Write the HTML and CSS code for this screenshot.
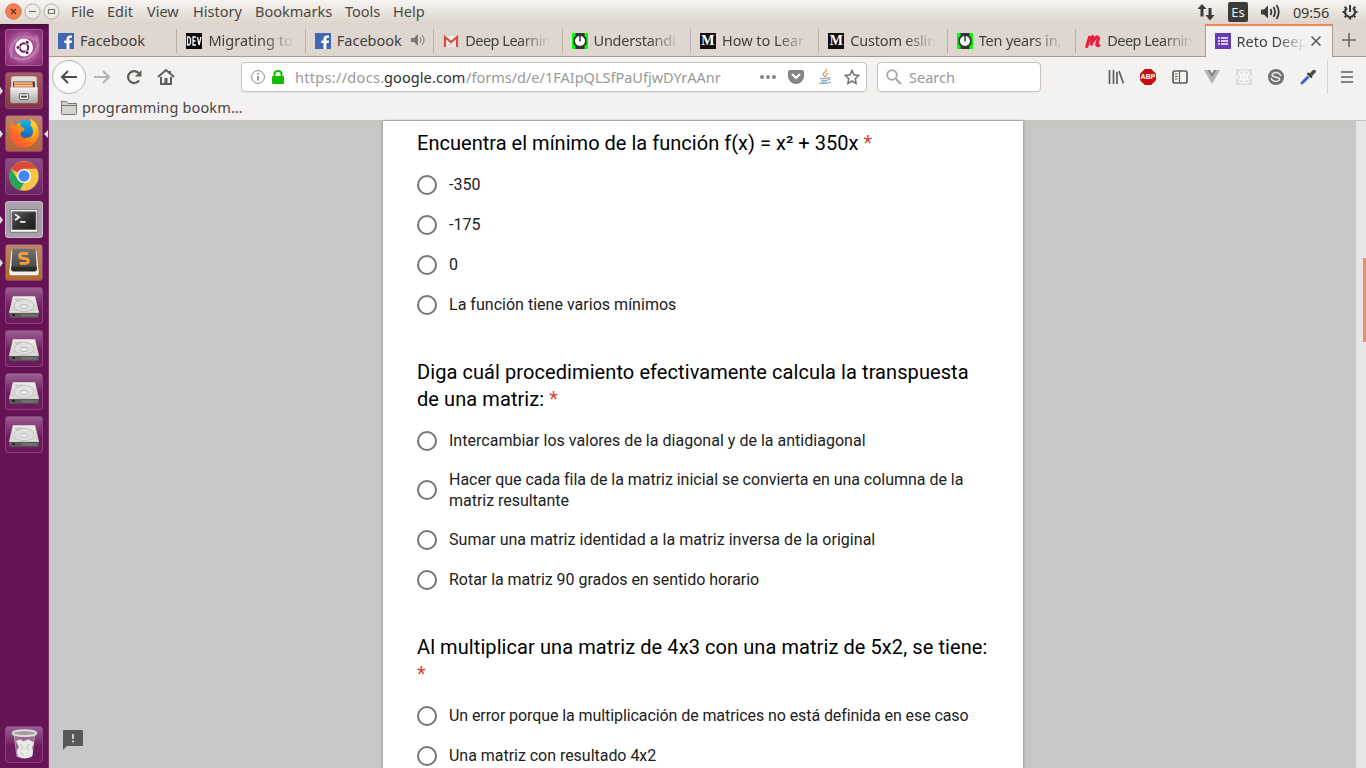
FILE: index.html
```html
<!DOCTYPE html>
<html lang="es">
<head>
<meta charset="utf-8">
<title>Reto Deep Learning</title>
<link rel="stylesheet" href="styles.css">
</head>
<body>
<svg class="defs" width="0" height="0">
  <defs>
    <linearGradient id="metal" x1="0" y1="0" x2="0" y2="1"><stop offset="0" stop-color="#f4f4f2"/><stop offset="1" stop-color="#a5a5a2"/></linearGradient>
    <linearGradient id="plate" x1="0" y1="0" x2="0" y2="1"><stop offset="0" stop-color="#ececea"/><stop offset="1" stop-color="#cfcfcc"/></linearGradient>
    <linearGradient id="dark" x1="0" y1="0" x2="1" y2="1"><stop offset="0" stop-color="#686866"/><stop offset=".5" stop-color="#30302f"/><stop offset="1" stop-color="#1c1c1b"/></linearGradient>
    <linearGradient id="key" x1="0" y1="0" x2="0" y2="1"><stop offset="0" stop-color="#737371"/><stop offset="1" stop-color="#444442"/></linearGradient>
    <linearGradient id="fox" x1="1" y1="0" x2="0" y2="1"><stop offset="0" stop-color="#fff33d"/><stop offset=".45" stop-color="#ff980e"/><stop offset="1" stop-color="#ff2450"/></linearGradient>
    <linearGradient id="globe" x1="0" y1="0" x2="0" y2="1"><stop offset="0" stop-color="#10b6e8"/><stop offset="1" stop-color="#223d9c"/></linearGradient>
    <symbol id="fb" viewBox="0 0 16 16"><path fill="#4267b2" d="M0 0h16v16H0z"/><path fill="#fff" d="M8.500 16v-6H6.300V7.500h2.200V6c0-2.300 1.400-3.500 3.500-3.500h2v2.300h-1.300c-1 0-1.300.5-1.300 1.300v1.400H14l-.3 2.500h-2.300v6z"/></symbol>
    <symbol id="watch" viewBox="0 0 16 16"><path fill="#0f0" d="M0 0h16v16H0z"/><path fill="#333" d="M3.500 0h9v3l2 2v6l-2 2v3h-9v-3l-2-2V5l2-2z"/><circle cx="8" cy="8" r="5" fill="#fff"/><path d="M8 3v5.500" stroke="#333" stroke-width="1.500"/></symbol>
    <symbol id="disk" viewBox="0 0 37 37"><path fill="url(#plate)" stroke="#e5e5e2" stroke-width=".6" d="M7 9h23l4 17H3z"/><path d="M3 26h31v4.500q0 1-1 1H4q-1 0-1-1z" fill="#5b5b58"/><path d="M3 25.500h31" stroke="#fff" stroke-width="1"/><path d="M16 28h17v2H16z" fill="#777"/><ellipse cx="18.500" cy="18.500" rx="10.500" ry="6.500" fill="#dfdfdd" stroke="#c1c1be"/><ellipse cx="18.500" cy="19.500" rx="4" ry="2" fill="#f7f7f6" stroke="#aaa"/><path d="M9 11.500h8l-6 3z" fill="#d2d2d0" stroke="#aaa" stroke-width=".5"/><path d="M6 28.500h3" stroke="#222" stroke-width="2"/></symbol>
  </defs>
</svg>

<header class="panel">
  <div class="wm">
    <svg width="60" height="24" viewBox="0 0 60 24"><circle cx="13.500" cy="11.500" r="7.800" fill="#f37f53" stroke="#cf7956"/><path d="M11 9l5 5m0-5l-5 5" stroke="#653522" stroke-width="1.300"/><circle cx="32.500" cy="11.500" r="7.600" fill="#efebe6" stroke="#b7aea5"/><path d="M29 11.500h7" stroke="#777067" stroke-width="1.200"/><circle cx="51.500" cy="11.500" r="7.600" fill="#efebe6" stroke="#b7aea5"/><path d="M48.500 9.500h6v4h-6z" fill="none" stroke="#777067" stroke-width="1.200"/></svg>
  </div>
  <nav class="menu"><span class="m-file">File</span><span class="m-edit">Edit</span><span class="m-view">View</span><span class="m-hist">History</span><span class="m-book">Bookmarks</span><span class="m-tools">Tools</span><span>Help</span></nav>
  <div class="tray">
    <svg width="18" height="18" viewBox="0 0 18 18" fill="#3c3b37"><path d="M5 1L.5 6h3v7.500h3V6h3z"/><path d="M13 17.500l-4.500-5.500h3V5h3v7h3z"/></svg>
    <span class="kbd">Es</span>
    <svg class="vol" width="20" height="18" viewBox="0 0 20 18"><path fill="#3c3b37" d="M0 6.500h3l4-4v13l-4-4H0z"/><path d="M9.500 6q1.800 3 0 6M12.500 4q3 5 0 10M15.500 2q4.500 7 0 14" fill="none" stroke="#3c3b37" stroke-width="1.800"/></svg>
    <span class="clock">09:56</span>
    <svg width="16" height="18" viewBox="0 0 16 18" fill="none" stroke="#3c3b37"><path d="M5 5a5 5 0 1 0 6 0" stroke-width="2.200"/><path d="M8 2v7" stroke-width="2"/><path d="M.5 9h2m11 0h2M2.700 3.700L4 5m8 0l1.300-1.300M2.700 14.300L4 13m8 0l1.300 1.300M8 14v2.500" stroke-width="2.200"/></svg>
  </div>
</header>

<div class="desk">
  <aside class="launcher">
    <div class="tile ubuntu"><svg viewBox="0 0 37 37"><circle cx="18.500" cy="18.500" r="14" fill="none" stroke="#fff" stroke-opacity=".1" stroke-width="6"/><path d="M6 30C0 12 17 1 32 11M31 5C39 23 22 36 8 29" fill="none" stroke="#fff" stroke-opacity=".2" stroke-width="3"/><circle cx="18.500" cy="18.500" r="9.500" fill="#fff"/><circle cx="18.500" cy="18.500" r="4.500" fill="none" stroke="#6a1358" stroke-width="2"/><g fill="#6a1358" stroke="#fff" stroke-width=".8"><circle cx="12.200" cy="18.500" r="2"/><circle cx="21.800" cy="13" r="2"/><circle cx="21.800" cy="24" r="2"/></g></svg></div>
    <div class="tile files run"><svg viewBox="0 0 37 37"><path d="M5 6q0-2.500 3-2.500h21q3 0 3 2.500v11H5z" fill="#dededb"/><path d="M7 9h23v7H7z" fill="#4b322b"/><path d="M8 10h20v5H8z" fill="#ed7434"/><path d="M8 10.500h19M8 13.500h20" stroke="#fff0d5" stroke-width="1"/><path d="M4 15h29v15q0 2-2 2H6q-2 0-2-2z" fill="url(#metal)"/><rect x="13.500" y="22" width="10" height="6" rx="1.500" fill="#eee" stroke="#555" stroke-width="1"/><path d="M15.500 25h6" stroke="#444" stroke-width="2"/></svg></div>
    <div class="tile firefox run active"><svg viewBox="0 0 37 37"><circle cx="19" cy="18" r="13.500" fill="url(#globe)"/><path d="M5 6q1 4 4 4 3-3 7-3-2 2-1 4l4 2q0 3-4 4-1 7 6 6 7 0 7-6 0-5-3-7 2-4 0-7 9 4 9 15a15 15 0 1 1-30-1q-1-6 1-11z" fill="url(#fox)"/><path d="M4 19c0 14 16 19 25 10 5-5 5-12 2-18 1 8-2 18-12 17-7 0-10-4-10-9z" fill="#ff6d25" fill-opacity=".4"/></svg></div>
    <div class="tile chrome"><svg viewBox="0 0 37 37"><circle cx="18.500" cy="18" r="15.500" fill="#f5c647"/><path d="M18.500 18L5 10.500a15.500 15.500 0 0 1 27-.1H18.500z" fill="#db4939"/><path d="M5 10.500l7 11.200 6.500 3.800-4.500 7.500A15.500 15.500 0 0 1 5 10.500z" fill="#27a35a"/><circle cx="18.500" cy="18" r="7.500" fill="#fff"/><circle cx="18.500" cy="18" r="6" fill="#4688f1"/></svg></div>
    <div class="tile terminal run"><svg viewBox="0 0 37 37"><path d="M4 8h29v24H4z" fill="#f4f4f3" stroke="#777"/><path d="M6 10.500h25v18.500H6z" fill="url(#dark)" stroke="#555"/><path d="M9 13l4.500 3L9 19m5.500 2h5.500" fill="none" stroke="#fff" stroke-width="1.700"/></svg></div>
    <div class="tile sublime run"><svg viewBox="0 0 37 37"><path d="M5 8q0-3 3-3h21q3 0 3 3l2 21q0 3-3 3H6q-3 0-3-3z" fill="#f3f1ee"/><path d="M8 4h21q2 0 2 2l1 20H5L6 6q0-2 2-2z" fill="url(#key)"/><path d="M5 23h27v3q0 2-2 2H7q-2 0-2-2z" fill="#2c2c2b"/><path d="M23 9h-6q-3 0-3 2.500 0 2 3 2.500l3 .5q3 .5 3 2.500 0 2.500-3 2.500h-6" fill="none" stroke="#ff9d3c" stroke-width="3"/></svg></div>
    <div class="tile"><svg><use href="#disk"/></svg></div>
    <div class="tile"><svg><use href="#disk"/></svg></div>
    <div class="tile"><svg><use href="#disk"/></svg></div>
    <div class="tile"><svg><use href="#disk"/></svg></div>
    <div class="tile trash"><svg viewBox="0 0 37 37"><path d="M8 7h22l-3 24q-8 4-16 0z" fill="#c8b7c5" fill-opacity=".4" stroke="#ddd" stroke-opacity=".6"/><path d="M10 15l4-2 4 2 5-2 6 3-2 6 1 3-1 6q-8 4-15 0l-1-6 2-4z" fill="#e9e9e7"/><path d="M14 18l3 3-2 3m9-6l-3 4 3 3M15 27l3 3" fill="none" stroke="#b5b5b3" stroke-width="1"/><ellipse cx="19" cy="6.500" rx="12.500" ry="3" fill="#a39aa0" stroke="#dedfdc" stroke-width="2"/></svg></div>
  </aside>

  <main class="browser">
    <div class="tabs">
      <div class="tab"><svg class="ico"><use href="#fb"/></svg><span>Facebook</span></div>
      <div class="tab"><svg class="ico" viewBox="0 0 16 16"><path fill="#0a0a0a" d="M0 0h16v16H0z"/><path d="M1.500 4v8H3l1.500-1.500v-5L3 4zM10 4H7v8h3M7 8h2.500M11.500 4l1.500 8 2-8" fill="none" stroke="#fff" stroke-width="1.300"/></svg><span class="fade">Migrating to</span></div>
      <div class="tab"><svg class="ico"><use href="#fb"/></svg><span class="short">Facebook</span><svg class="spk" width="14" height="12" viewBox="0 0 14 12"><path d="M0 4h3l4-4v12L3 8H0z" fill="#777"/><path d="M9 3q2 3 0 6M11 1q4 5 0 10" fill="none" stroke="#777"/></svg></div>
      <div class="tab"><svg class="ico" viewBox="0 0 16 16"><path d="M1 3h14v11H1z" fill="#f2f0ef"/><path d="M3 13l5-5 5 5" fill="#ddd"/><path d="M2 14V4l6 5 6-5v10" fill="none" stroke="#d54b3d" stroke-width="2.200"/></svg><span class="fade t1">Deep Learnin</span></div>
      <div class="tab"><svg class="ico"><use href="#watch"/></svg><span class="fade t2">Understandi</span></div>
      <div class="tab"><span class="medium">M</span><span class="fade">How to Lear</span></div>
      <div class="tab"><span class="medium">M</span><span class="fade t3">Custom eslin</span></div>
      <div class="tab"><svg class="ico"><use href="#watch"/></svg><span class="fade t3">Ten years in,</span></div>
      <div class="tab"><svg class="ico" viewBox="0 0 16 16"><path d="M1.800 13.500L4.500 4.500M4.200 7.500Q8 1.500 8 5L6.500 11M8 8q4.500-6.500 5.500-2.500l-1.700 5.500q0 2 2 1.500" fill="none" stroke="#ed1c40" stroke-width="3.200" stroke-linecap="round"/></svg><span class="fade t1">Deep Learnin</span></div>
      <div class="tab current"><svg class="ico" viewBox="0 0 16 16"><path fill="#673ab7" d="M0 0h16v16H0z"/><path d="M3 5h2m1 0h7M3 8h2m1 0h7M3 11h2m1 0h7" stroke="#fff" stroke-width="1.600"/></svg><span class="fade">Reto Deep</span><svg class="close" width="10" height="10" viewBox="0 0 10 10"><path d="M.5.5l9 9m0-9l-9 9" stroke="#555" stroke-width="1.500"/></svg></div>
      <div class="newtab"><svg width="14" height="14" viewBox="0 0 14 14"><path d="M7 0v14M0 7h14" stroke="#666" stroke-width="1.600"/></svg></div>
    </div>

    <div class="toolbar">
      <div class="back"><svg width="18" height="16" viewBox="0 0 18 16"><path d="M17 8H2m6-6L2 8l6 6" fill="none" stroke="#4d4d4b" stroke-width="2"/></svg></div>
      <svg class="fwd" width="18" height="16" viewBox="0 0 18 16"><path d="M1 8h15m-6-6l6 6-6 6" fill="none" stroke="#b5b4b2" stroke-width="2"/></svg>
      <svg class="reload" width="16" height="16" viewBox="0 0 16 16"><path d="M13 11.500A6 6 0 1 1 12.500 4" fill="none" stroke="#5d5d5b" stroke-width="2.200"/><path d="M15.500 1v6.500H9z" fill="#5d5d5b"/></svg>
      <svg class="home" width="18" height="18" viewBox="0 0 18 18"><path d="M1 9l8-7 8 7" fill="none" stroke="#5d5d5b" stroke-width="2"/><path d="M4 9v7h10V9" fill="none" stroke="#5d5d5b" stroke-width="2"/><path d="M7.500 10h3v6h-3zM12 3h2v4l-2-2z" fill="#5d5d5b"/></svg>
      <div class="url">
        <svg width="14" height="14" viewBox="0 0 14 14"><circle cx="7" cy="7" r="6.400" fill="none" stroke="#888"/><path d="M7 6v4.500M7 3v1.500" stroke="#777" stroke-width="1.500"/></svg>
        <svg class="lock" width="12" height="14" viewBox="0 0 12 14"><path d="M2.500 7V4q0-3 3.500-3t3.500 3v3" fill="none" stroke="#12bc00" stroke-width="2"/><rect y="6" width="12" height="8" rx="1" fill="#12bc00"/></svg>
        <span class="addr"><span class="u1">https://docs.</span><b>google.com</b><span class="u2">/forms/d/e/1FAIpQLSfPaUfjwDYrAAnr</span></span>
        <svg class="dots" width="16" height="4" viewBox="0 0 16 4" fill="#858585"><circle cx="2" cy="2" r="2"/><circle cx="8" cy="2" r="2"/><circle cx="14" cy="2" r="2"/></svg>
        <svg class="pocket" width="16" height="14" viewBox="0 0 16 14"><path d="M2 0h12q2 0 2 2v4a8 8 0 0 1-16 0V2q0-2 2-2z" fill="#858585"/><path d="M4.500 4.500L8 8l3.500-3.500" fill="none" stroke="#fff" stroke-width="2" stroke-linecap="round"/></svg>
        <svg class="java" width="14" height="16" viewBox="0 0 14 16" fill="none"><path d="M7 8Q3 5 7 3q2-1 1-3M8 8q-1-2 2-4" stroke="#ed8b45" stroke-width="1.200"/><path d="M2 9q4 1 8 0M3 11q4 1 7 0M10 9q3-1 2 1-1 1-2 1M1 14q6 2 12-1M3 13h6" stroke="#7a9dbb"/></svg>
        <svg class="star" width="16" height="16" viewBox="0 0 16 16"><path d="M8 1.500l2 4.300 4.700.6-3.400 3.300.8 4.700L8 12l-4.100 2.400.8-4.700L1.300 6.400 6 5.800z" fill="none" stroke="#777" stroke-width="1.600"/></svg>
      </div>
      <div class="search"><svg width="16" height="16" viewBox="0 0 16 16"><circle cx="6" cy="6" r="4.800" fill="none" stroke="#aaa" stroke-width="2"/><path d="M10 10l5 5" stroke="#aaa" stroke-width="2.200"/></svg><span>Search</span></div>
      <div class="ext">
        <svg viewBox="0 0 16 16"><path d="M1.500 1v14M5.500 1v14M9 3v12M11 2l4.500 12.500" fill="none" stroke="#5d5d5b" stroke-width="1.700"/></svg>
        <span class="abp">ABP</span>
        <svg viewBox="0 0 16 16"><rect x="1" y="2" width="14" height="12" rx="2" fill="none" stroke="#5d5d5b" stroke-width="1.700"/><path d="M7.500 2v12M3 5h2.500M3 7.500h2.500M3 10h2.500" stroke="#5d5d5b" stroke-width="1.200"/></svg>
        <svg viewBox="0 0 16 16"><path d="M0 1h3.500L8 9l4.500-8H16L8 15z" fill="#b5b5b5"/><path d="M3.500 1H6l2 3.500L10 1h2.500L8 9z" fill="#828282"/></svg>
        <svg viewBox="0 0 16 16"><path d="M0 0h16v16H0z" fill="#dededd"/><g fill="none" stroke="#fff"><ellipse cx="8" cy="8" rx="7" ry="2.700"/><ellipse cx="8" cy="8" rx="7" ry="2.700" transform="rotate(60 8 8)"/><ellipse cx="8" cy="8" rx="7" ry="2.700" transform="rotate(120 8 8)"/></g><circle cx="8" cy="8" r="1.500" fill="#fff"/></svg>
        <svg viewBox="0 0 16 16"><circle cx="8" cy="8" r="8" fill="#707070"/><path d="M13 7Q11 3 7 3.500 3 5 4.500 7l7 2.500q1 2-3.500 3Q4.500 12.500 3 9" fill="none" stroke="#e8e8e8" stroke-width="1.600"/></svg>
        <svg viewBox="0 0 16 16"><path d="M2 14l8-8" stroke="#9cadc2" stroke-width="3.500"/><path d="M1 15l7-7" stroke="#3155cb" stroke-width="2"/><path d="M7.500 4l4.500 4.500" stroke="#333" stroke-width="2"/><path d="M9 5l4-4q3-1 3 2l-4 4z" fill="#4b4b4b"/></svg>
      </div>
      <div class="hamb"><svg width="12" height="12" viewBox="0 0 12 12"><path d="M0 1h12M0 6h12M0 11h12" stroke="#5d5d5b" stroke-width="1.700"/></svg></div>
    </div>
    <div class="bookmarks"><svg width="16" height="14" viewBox="0 0 16 14"><path d="M.5 12.500v-12h5l1.500 2h8.500v10q0 1-1 1h-13q-1 0-1-1zM.5 4.500h15" fill="#d5d3d0" stroke="#777"/></svg><span>programming bookm…</span></div>

    <div class="page">
      <div class="feedback"><svg width="20" height="20" viewBox="0 0 20 20"><path d="M1 0h18q1 0 1 1v14q0 1-1 1H4l-4 4V1q0-1 1-1z" fill="#585857"/><path d="M10 4v5m0 1.500v2" stroke="#ccc" stroke-width="2"/></svg></div>
      <form class="sheet">
        <section class="q">
          <h2 class="single">Encuentra el mínimo de la función f(x) = x² + 350x <i>*</i></h2>
          <label><span class="radio"></span><span class="opt">-350</span></label>
          <label><span class="radio"></span><span class="opt">-175</span></label>
          <label><span class="radio"></span><span class="opt">0</span></label>
          <label><span class="radio"></span><span class="opt">La función tiene varios mínimos</span></label>
        </section>
        <section class="q">
          <h2>Diga cuál procedimiento efectivamente calcula la transpuesta<br>de una matriz: <i>*</i></h2>
          <label><span class="radio"></span><span class="opt">Intercambiar los valores de la diagonal y de la antidiagonal</span></label>
          <label class="two"><span class="radio"></span><span class="opt snug">Hacer que cada fila de la matriz inicial se convierta en una columna de la<br>matriz resultante</span></label>
          <label><span class="radio"></span><span class="opt loose">Sumar una matriz identidad a la matriz inversa de la original</span></label>
          <label><span class="radio"></span><span class="opt snug">Rotar la matriz 90 grados en sentido horario</span></label>
        </section>
        <section class="q">
          <h2>Al multiplicar una matriz de 4x3 con una matriz de 5x2, se tiene:<br><i>*</i></h2>
          <label><span class="radio"></span><span class="opt tight">Un error porque la multiplicación de matrices no está definida en ese caso</span></label>
          <label><span class="radio"></span><span class="opt snug">Una matriz con resultado 4x2</span></label>
        </section>
      </form>
      <div class="scroll"><div class="thumb"></div></div>
    </div>
  </main>
</div>
</body>
</html>
```
FILE: styles.css
```css
* { box-sizing: border-box; }
body { margin: 0; width: 1366px; height: 768px; overflow: hidden; font-family: "Noto Sans", sans-serif; font-size: 14.5px; color: #4c4c4c; }
.defs { position: absolute; }
svg { display: block; flex: none; }

/* System panel */
.panel { height: 24px; display: flex; background: linear-gradient(#f6f4f1, #dcd4cc); }
.wm { width: 71px; }
.menu { display: flex; line-height: 23px; white-space: nowrap; flex: 1; color: #4a4743; }
.m-file { width: 36px; }
.m-edit { width: 40px; }
.m-view { width: 46px; }
.m-hist { width: 62px; }
.m-book { width: 90px; }
.m-tools { width: 48px; }
.tray { display: flex; align-items: center; width: 169px; color: #3c3b37; }
.kbd { width: 20px; height: 20px; margin-left: 13px; border-radius: 2px; background: #3c3b37; color: #eee; font-size: 13px; line-height: 20px; text-align: center; }
.vol { margin-left: 13px; }
.clock { width: 49px; padding-left: 12px; letter-spacing: -.2px; line-height: 22px; margin-top: -1px; }
.tray > :last-child { margin-left: 12px; }

/* Launcher */
.desk { display: flex; height: 744px; }
.launcher { width: 49px; padding: 5px 0 5px 5px; background: linear-gradient(#4a0b40, #651354 8px, #651354); border-right: 1px solid #7d316e; display: flex; flex-direction: column; gap: 6px; }
.tile { width: 38px; height: 37px; flex: none; border-radius: 3px; border: 1px solid #8a427c; background: linear-gradient(#9a5f90, #701b60 55%, #6d1a5d); position: relative; }
.tile svg { width: 36px; height: 35px; }
.ubuntu { background: radial-gradient(#b862a5, #8b2a78); border-color: #a75b99; }
.files { background: linear-gradient(#a85d5f, #853444); }
.firefox { background: linear-gradient(#bd826a, #b26339); }
.chrome { background: linear-gradient(#8f4f84, #6a2564); }
.terminal { background: #aaa0ab; border-color: #c4bcc4; }
.sublime { background: linear-gradient(#ba8766, #af6b2d); }
.trash { margin-top: auto; }
.run::before { content: ""; position: absolute; left: -6px; top: 14px; border: 4px solid transparent; border-left: 3px solid #ddd; border-right: 0; }
.active::after { content: ""; position: absolute; right: -6px; top: 14px; border: 4px solid transparent; border-right: 4px solid #ddd; border-left: 0; }

/* Tabs */
.browser { width: 1317px; display: flex; flex-direction: column; background: #f4f2f0; }
.tabs { display: flex; height: 33px; background: #dfd7cf; border-bottom: 1px solid #a69a91; }
.tab { width: 128.4px; height: 32px; flex: none; padding-left: 9px; display: flex; align-items: center; background: linear-gradient(#b8b0a8, #b8b0a8) right 5px / 1px 24px no-repeat; color: #404040; }
.ico, .medium { width: 16px; height: 16px; margin: 1px 6px 0 0; }
.tab:nth-child(9) { background: none; }
.tab > span:not(.medium) { width: 86px; white-space: nowrap; line-height: 20px; margin-top: 0; }
.tab > .fade { -webkit-mask-image: linear-gradient(90deg, #000 55px, transparent 86px); mask-image: linear-gradient(90deg, #000 55px, transparent 86px); }
.tab > .t1 { letter-spacing: -.5px; }
.tab > .t2 { letter-spacing: -.25px; }
.tab > .t3 { letter-spacing: -.2px; }
.tab > span.short:not(.medium) { width: 74px; }
.medium { background: #12100e; color: #fff; font: bold 14px/16px "Liberation Serif", serif; text-align: center; }
.current { height: 33px; border-top: 2px solid #f0855a; border-left: 1px solid #a69a91; border-right: 1px solid #a69a91; background: #f4f2f0; }
.tab.current .ico { margin-top: -1px; }
.tab.current > span.fade { width: 69px; margin-top: -2px; -webkit-mask-image: linear-gradient(90deg, #000 40px, transparent 69px); mask-image: linear-gradient(90deg, #000 40px, transparent 69px); }
.close { margin: -2px 0 0 5px; }
.newtab { flex: 1; display: grid; place-items: center; }

/* Navigation */
.toolbar { display: flex; align-items: center; height: 40px; }
.back { width: 34px; height: 34px; margin-left: 3px; border: 1px solid #b4b0ac; border-radius: 50%; background: #fcfcfc; display: grid; place-items: center; }
.fwd { margin-left: 7px; }
.reload { margin-left: 15px; }
.home { margin-left: 15px; }
.url, .search { height: 30px; background: #fff; border: 1px solid #c6c2be; border-radius: 4px; display: flex; align-items: center; box-shadow: 0 1px 2px #0000000d; }
.url { width: 626px; margin-left: 66px; padding-left: 9px; }
.lock { margin-left: 7px; }
.addr { width: 430px; margin-left: 11px; display: flex; white-space: nowrap; color: #999; line-height: 22px; }
.addr b { width: 82px; font-weight: 400; color: #2e2e2e; letter-spacing: .1px; }
.u1 { width: 89px; letter-spacing: .3px; }
.dots { margin-left: 35px; }
.pocket { margin-left: 12px; }
.java { margin-left: 14px; }
.star { margin-left: 12px; }
.search { width: 164px; margin-left: 10px; padding-left: 8px; gap: 7px; color: #999; }
.ext { display: flex; gap: 16px; margin-left: 67px; }
.ext svg { width: 16px; height: 16px; }
.abp { width: 16px; height: 16px; background: #c70d0d; color: #fff; font: bold 7px/16px "Liberation Sans", sans-serif; text-align: center; clip-path: polygon(30% 0, 70% 0, 100% 30%, 100% 70%, 70% 100%, 30% 100%, 0 70%, 0 30%); }
.hamb { height: 34px; margin-left: 11px; padding-left: 13px; border-left: 1px solid #d7d3cf; display: flex; align-items: center; }
.bookmarks { height: 24px; display: flex; align-items: center; padding: 0 0 2px 12px; gap: 5px; border-bottom: 1px solid #c7c2bd; color: #444; }
.bookmarks span { letter-spacing: .15px; line-height: 20px; margin-top: -1px; }

/* Form page */
.page { flex: 1; min-height: 0; display: flex; background: #c7c7c5; font-family: Roboto, sans-serif; }
.feedback { width: 334px; padding: 609px 0 0 14px; }
.sheet { width: 640px; padding: 9px 0 0 34px; background: #fff; box-shadow: 0 0 3px #0006; overflow: hidden; color: #212121; }
.q { margin-bottom: 34px; }
h2 { margin: 0 0 8px; font-size: 20px; line-height: 27px; font-weight: 400; letter-spacing: .08px; color: #000; white-space: nowrap; }
h2.single { letter-spacing: .025px; }
i { color: #db4437; font-style: normal; }
label { display: flex; align-items: center; height: 40px; font-size: 16px; line-height: 21px; gap: 12px; white-space: nowrap; }
label.two { height: 59px; }
.opt { padding-bottom: 2px; letter-spacing: .02px; }
.snug { letter-spacing: -.03px; }
.loose { letter-spacing: .03px; }
.tight { letter-spacing: -.085px; }
.two .radio { margin-top: -1px; }
.radio { width: 20px; height: 20px; flex: none; border: 2px solid #757575; border-radius: 50%; }
.scroll { width: 10px; margin-left: auto; background: #e6e6e6; }
.thumb { width: 3px; height: 84px; margin: 137px 0 0 auto; background: #ef8d68; }
```
